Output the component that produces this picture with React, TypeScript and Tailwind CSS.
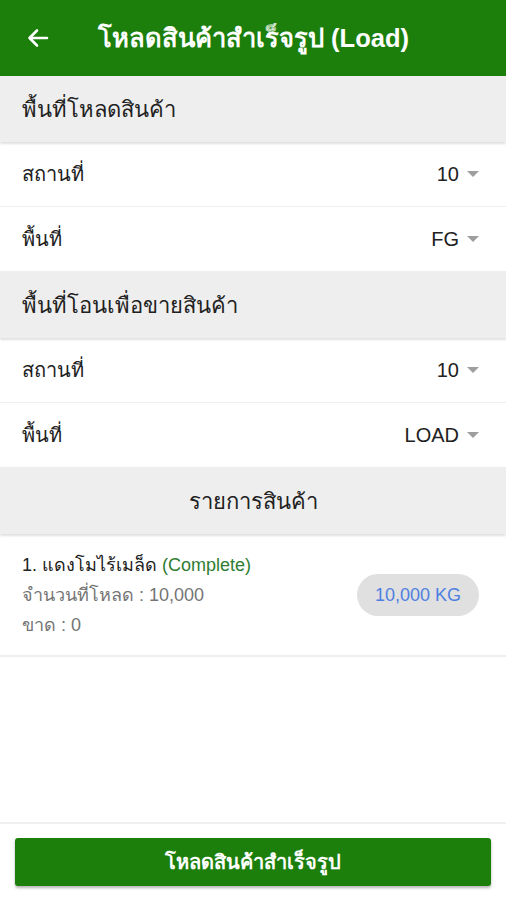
import React from 'react';

const font = { fontFamily: '"Liberation Sans", "Noto Sans", sans-serif' };

const Caret: React.FC = () => (
  <svg width="12" height="6" viewBox="0 0 12 6" className="ml-2">
    <path d="M0 0 L12 0 L6 6 Z" fill="#9e9e9e" />
  </svg>
);

const SectionHeader: React.FC<{ title: string; center?: boolean }> = ({ title, center }) => (
  <div
    className={`h-[66px] bg-[#eeeeee] flex items-center px-[22px] text-[22px] text-[#212121] shadow-[0_2px_2px_rgba(0,0,0,0.12)] relative ${
      center ? 'justify-center' : ''
    }`}
  >
    {title}
  </div>
);

const SelectRow: React.FC<{ label: string; value: string }> = ({ label, value }) => (
  <div className="h-[65px] flex items-center justify-between pl-[22px] pr-[27px] border-b border-[#eeeeee] bg-white">
    <span className="text-[20px] text-[#212121]">{label}</span>
    <span className="flex items-center text-[20px] text-[#212121]">
      {value}
      <Caret />
    </span>
  </div>
);

export default function App() {
  return (
    <div className="min-h-screen flex flex-col bg-white" style={font}>
      <header className="h-[76px] bg-[#1c7f0c] flex items-center px-[26px] text-white">
        <svg width="24" height="24" viewBox="0 0 24 24" fill="none" stroke="white" strokeWidth="2.6" strokeLinecap="round" strokeLinejoin="round">
          <path d="M21 12H3.5M11 4.5L3.5 12L11 19.5" />
        </svg>
        <h1 className="ml-[48px] text-[25.5px] font-bold">โหลดสินค้าสำเร็จรูป (Load)</h1>
      </header>

      <main className="flex-1">
        <SectionHeader title="พื้นที่โหลดสินค้า" />
        <SelectRow label="สถานที่" value="10" />
        <SelectRow label="พื้นที่" value="FG" />
        <SectionHeader title="พื้นที่โอนเพื่อขายสินค้า" />
        <SelectRow label="สถานที่" value="10" />
        <SelectRow label="พื้นที่" value="LOAD" />
        <SectionHeader title="รายการสินค้า" center />

        <div className="flex items-center justify-between pl-[22px] pr-[27px] pt-[19px] pb-[18px] border-b-2 border-[#eeeeee]">
          <div className="flex flex-col gap-[6px] text-[18px] leading-[24px]">
            <div className="text-[#212121]">
              1. แดงโมไร้เมล็ด <span className="text-[#2e7d32]">(Complete)</span>
            </div>
            <div className="text-[#757575]">จำนวนที่โหลด : 10,000</div>
            <div className="text-[#757575]">ขาด : 0</div>
          </div>
          <div className="h-[42px] w-[122px] rounded-full bg-[#e0e0e0] flex items-center justify-center text-[18px] text-[#4f7fe0]">
            10,000 KG
          </div>
        </div>
      </main>

      <footer className="border-t-2 border-[#f0f0f0] pt-[14px] pb-[14px] px-[15px]">
        <button className="w-full h-[48px] rounded-[3px] bg-[#1c7f0c] text-white text-[20px] font-bold shadow-[0_2px_3px_rgba(0,0,0,0.3)]">
          โหลดสินค้าสำเร็จรูป
        </button>
      </footer>
    </div>
  );
}
